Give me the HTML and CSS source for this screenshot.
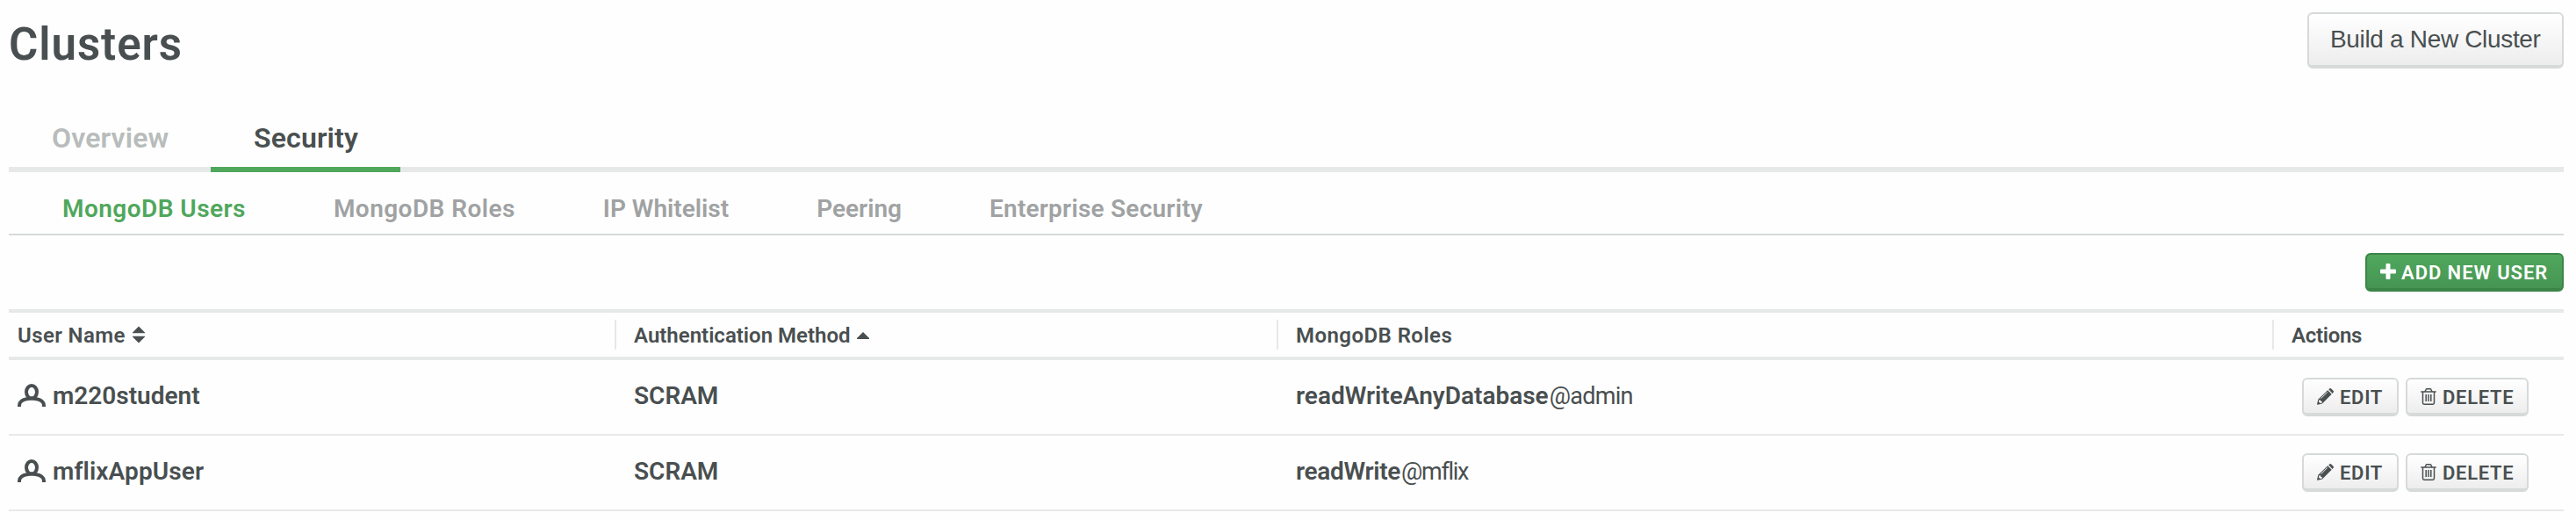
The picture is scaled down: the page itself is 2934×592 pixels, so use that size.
FILE: index.html
```html
<!DOCTYPE html>
<html lang="en">
<head>
<meta charset="utf-8">
<title>Clusters</title>
<link rel="stylesheet" href="styles.css">
</head>
<body>
<svg class="sprite" aria-hidden="true">
  <symbol id="user" viewBox="0 0 32 26">
    <ellipse cx="16" cy="9.300" rx="6" ry="7.300"/>
    <path d="M2 26v-1.500c0-4.500 3.500-6.500 9.500-7.500q4.500-.9 9 0c6 1 9.500 3 9.500 7.500V26"/>
  </symbol>
  <symbol id="pencil" viewBox="0 0 19 19">
    <path fill="currentColor" d="M13.200 1.200l1-.8a1.500 1.500 0 0 1 2 .1l2.300 2.300a1.500 1.500 0 0 1 .1 2l-1 1.100zM12.200 2.200l4.500 4.500L6 17.400l-5.300 1.300a.5.5 0 0 1-.6-.6l1.200-5.300z"/>
    <path fill="none" stroke="#f7f7f7" d="M4.500 11.700l7.300-7.300"/>
    <path fill="#f7f7f7" d="M2.400 13.300l1.800.3.200 1.300 1.300.2.200 1.500-2.300.5-1.600-1.600z"/>
  </symbol>
  <symbol id="trash" viewBox="0 0 18 19">
    <path fill="none" stroke="currentColor" stroke-width="1.500" d="M.3 4h17.400M5 3.800L6.200 1.300q.2-.5.8-.5h4q.6 0 .8.500L13 3.800M2.500 4v12.500q0 1.700 1.500 1.700h10q1.500 0 1.500-1.700V4M6.200 7v8M9 7v8M11.800 7v8"/>
  </symbol>
  <symbol id="plus" viewBox="0 0 18 18">
    <path fill="currentColor" d="M7.700 0h2.600q1.200 0 1.200 1.200v5.300h5.300q1.200 0 1.200 1.200v2.600q0 1.200-1.200 1.200h-5.300v5.300q0 1.200-1.200 1.200H7.700q-1.200 0-1.200-1.200v-5.300H1.200Q0 11.500 0 10.300V7.700q0-1.200 1.200-1.200h5.300V1.200Q6.500 0 7.700 0z"/>
  </symbol>
</svg>

<header class="page-header">
  <h1 class="title">Clusters</h1>
  <button class="btn btn-large">Build a New Cluster</button>
</header>

<nav class="tabs">
  <a class="tab">Overview</a>
  <a class="tab tab-active">Security</a>
</nav>

<nav class="subtabs">
  <a class="subtab subtab-active wide">MongoDB Users</a>
  <a class="subtab wide">MongoDB Roles</a>
  <a class="subtab">IP Whitelist</a>
  <a class="subtab">Peering</a>
  <a class="subtab medium">Enterprise Security</a>
</nav>

<div class="toolbar">
  <button class="btn btn-small btn-primary"><svg class="icon-plus"><use href="#plus"/></svg>ADD NEW USER</button>
</div>

<section class="table">
  <div class="row head">
    <div class="th th-first">User Name<svg class="sort" viewBox="0 0 14 20"><path d="M7 .5l7 7v.7H0v-.7zM0 11.800h14v.7l-7 7-7-7z"/></svg></div>
    <div class="th">Authentication Method<svg class="sort" viewBox="0 0 14 20"><path d="M7 7l7 7v.9H0V14z"/></svg></div>
    <div class="th wide">MongoDB Roles</div>
    <div class="th tight">Actions</div>
  </div>
  <div class="row body">
    <div class="td td-user"><svg class="icon-user"><use href="#user"/></svg>m220student</div>
    <div class="td">SCRAM</div>
    <div class="td">readWriteAnyDatabase<span class="db">@admin</span></div>
    <div class="td td-actions">
      <button class="btn btn-small"><svg class="icon-pencil"><use href="#pencil"/></svg>EDIT</button>
      <button class="btn btn-small"><svg class="icon-trash"><use href="#trash"/></svg>DELETE</button>
    </div>
  </div>
  <div class="row body">
    <div class="td td-user slight"><svg class="icon-user"><use href="#user"/></svg>mflixAppUser</div>
    <div class="td">SCRAM</div>
    <div class="td"><span class="tight">readWrite</span><span class="db db-narrow">@mflix</span></div>
    <div class="td td-actions">
      <button class="btn btn-small"><svg class="icon-pencil"><use href="#pencil"/></svg>EDIT</button>
      <button class="btn btn-small"><svg class="icon-trash"><use href="#trash"/></svg>DELETE</button>
    </div>
  </div>
</section>
</body>
</html>
```

FILE: styles.css
```css
* { box-sizing: border-box; }

body {
  margin: 0;
  padding: 0 14px 0 10px;
  background: #fefefe;
  color: #494f50;
  font-family: Roboto, "Liberation Sans", sans-serif;
  font-weight: 600;
}

.sprite { display: none; }

.page-header {
  display: flex;
  justify-content: space-between;
  align-items: flex-start;
  height: 78px;
  padding-top: 14px;
}

.title {
  margin: 5px 0 0;
  font-size: 51px;
  font-weight: 600;
  line-height: 64px;
  letter-spacing: 0.95px;
}

.btn {
  display: flex;
  align-items: center;
  margin: 0;
  border: 2px solid #d6dad9;
  border-bottom-width: 4px;
  border-radius: 6px;
  background: linear-gradient(#ffffff, #ededed);
  color: #494f50;
  white-space: nowrap;
}

.btn-large {
  width: 292px;
  height: 64px;
  padding: 0 0 1px 24px;
  font: 400 28px "Liberation Sans", sans-serif;
  letter-spacing: -0.33px;
}

.btn-small {
  height: 44px;
  padding: 2px 15px 0;
  font: 600 22px Roboto, sans-serif;
  letter-spacing: 0.7px;
}

.btn-small svg { flex: none; margin-top: -2px; }

.btn-primary {
  width: 226px;
  border-color: #3c8548;
  background: linear-gradient(#50a85d, #469553);
  color: #ffffff;
  letter-spacing: 0.95px;
}

.tabs {
  display: flex;
  height: 118px;
  box-shadow: inset 0 -6px #e7e9e8;
}

.tab {
  width: 230px;
  padding: 59px 0 0 49px;
  color: #b8bcbb;
  font-size: 32px;
  line-height: 40px;
  letter-spacing: 0.15px;
}

.tab-active {
  width: 216px;
  border-bottom: 6px solid #4fa75c;
  color: #494f50;
}

.subtabs {
  display: flex;
  gap: 100px;
  height: 72px;
  padding: 25px 0 0 61px;
  border-bottom: 2px solid #d6dad9;
}

.subtab {
  color: #a0a2a3;
  font-size: 28px;
  line-height: 34px;
}

.subtab-active { color: #4fa75c; }
.wide { letter-spacing: 0.45px; }
.medium { letter-spacing: 0.23px; }
.slight { letter-spacing: 0.12px; }
.tight { letter-spacing: -0.3px; }

.toolbar {
  display: flex;
  justify-content: flex-end;
  height: 84px;
  padding-top: 20px;
}

.icon-plus { width: 18px; height: 18px; margin-right: 6px; }
.icon-pencil { width: 19px; height: 19px; margin-right: 7px; }
.icon-trash { width: 18px; height: 19px; margin-right: 7px; }

.row {
  display: grid;
  grid-template-columns: 690px 754px 1134px 1fr;
}

.head {
  height: 58px;
  padding: 8px 0;
  border: solid #e7e9e8;
  border-width: 4px 0;
  font-size: 24px;
  line-height: 36px;
}

.th {
  display: flex;
  height: 34px;
  padding-left: 20px;
  border-left: 2px solid #e7e9e8;
}

.th-first {
  padding-left: 10px;
  border-left: 0;
  letter-spacing: 0.4px;
}

.sort {
  width: 14px;
  height: 20px;
  margin: 7px 0 0 8px;
  fill: #494f50;
}

.body {
  height: 86px;
  border-bottom: 2px solid #e7e9e8;
  font-size: 28px;
  line-height: 81px;
}

.td { padding-left: 22px; white-space: nowrap; }

.td-user { display: flex; padding-left: 10px; }

.icon-user {
  width: 32px;
  height: 26px;
  margin: 27px 8px 0 0;
  fill: none;
  stroke: #494f50;
  stroke-width: 4;
}

.db {
  margin-left: 1px;
  font-size: 27px;
  font-weight: 400;
  letter-spacing: -0.7px;
}

.db-narrow { letter-spacing: -1.3px; }

.td-actions {
  display: flex;
  gap: 8px;
  padding: 20px 0 0 34px;
}

.td-actions .btn:first-child { width: 110px; }
.td-actions .btn:last-child { width: 140px; }
```
